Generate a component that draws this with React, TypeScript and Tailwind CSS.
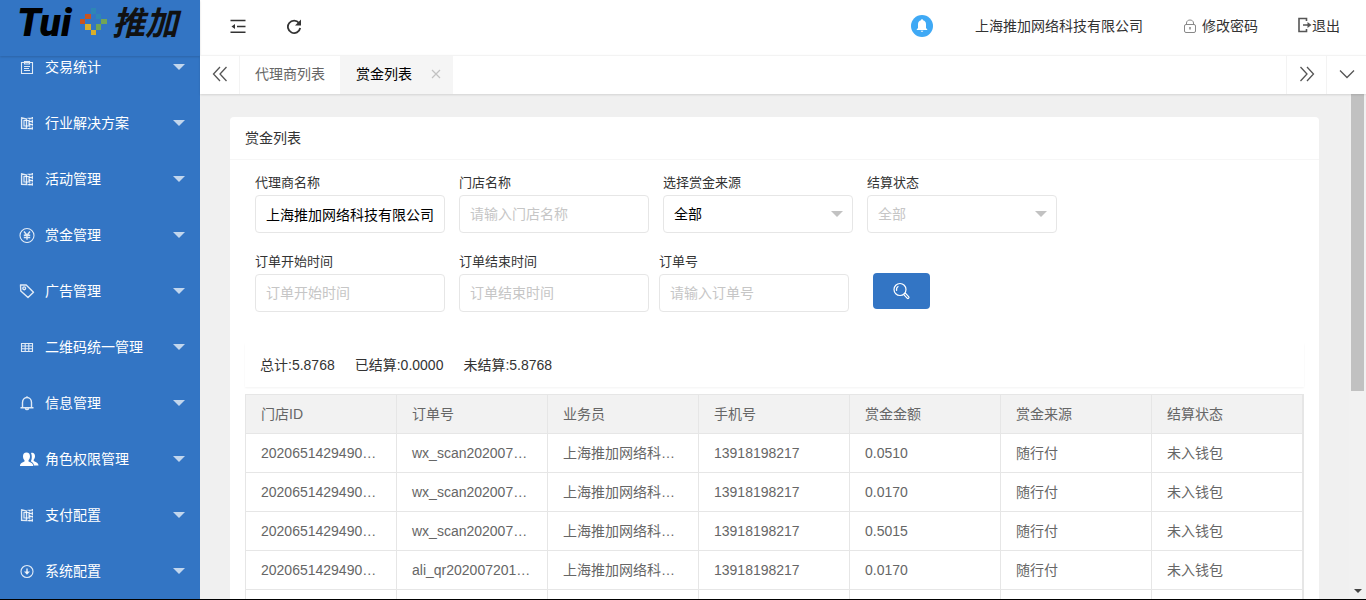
import type { ReactNode } from "react";

interface MenuItem {
  label: string;
  icon: ReactNode;
}

const stroke = {
  width: 16,
  height: 16,
  viewBox: "0 0 16 16",
  fill: "none",
  stroke: "currentColor",
  strokeWidth: 1.1,
};

const BookIcon = () => (
  <svg {...stroke}>
    <path d="M2.600 2.500v11M2 2.700l5.500 1.300v9.500L2 13.200" strokeWidth="1.400" />
    <path d="M5 5.500h5v5.500H5z" strokeWidth="1.200" />
    <path d="M13.300 2v12.500M10.800 3v11.500" strokeDasharray="1.600 .8" strokeWidth="1.300" />
    <path d="M8.500 3.200h5.500M8.500 13.600h5.500M10 6.500h4M10 9.500h4" strokeWidth="1.100" />
  </svg>
);

const MENU: MenuItem[] = [
  {
    label: "交易统计",
    icon: (
      <svg {...stroke}>
        <path d="M2.500 3.500h11v11h-11zM5.500 2.500h5v2.500h-5zM5 7.500h6M5 9.500h5M5 11.500h6" />
      </svg>
    ),
  },
  { label: "行业解决方案", icon: <BookIcon /> },
  { label: "活动管理", icon: <BookIcon /> },
  {
    label: "赏金管理",
    icon: (
      <svg {...stroke}>
        <circle cx="8" cy="8.500" r="7" />
        <path d="M5 4.500l3 3.800 3-3.800M8 8v4.800M4.800 8.300h6.400M4.800 10.500h6.400" strokeWidth="1.400" />
      </svg>
    ),
  },
  {
    label: "广告管理",
    icon: (
      <svg {...stroke} strokeWidth={1.4}>
        <path d="M1.500 2h5.700l7.300 7.200-5.500 5.300-7.200-6.500z" strokeLinejoin="round" />
        <circle cx="5.200" cy="5.300" r="1.400" />
      </svg>
    ),
  },
  {
    label: "二维码统一管理",
    icon: (
      <svg {...stroke}>
        <path d="M2.500 4.500h11v8h-11zM2.500 7h11M2.500 9.700h11M6.200 4.500v8M9.800 4.500v8" />
      </svg>
    ),
  },
  {
    label: "信息管理",
    icon: (
      <svg {...stroke} strokeWidth={1.4}>
        <path d="M1.500 12.800h13M3.500 12.800V7.500c0-3 2-5 4.500-5s4.500 2 4.500 5v5.300M6.500 13.500c.3 1.500 2.700 1.500 3 0M8 1.200v1.300" />
      </svg>
    ),
  },
  {
    label: "角色权限管理",
    icon: (
      <svg width="20" height="16" viewBox="0 0 20 16" fill="#fff">
        <path d="M12 2c2-1 4 .3 4 3 0 1.800-.6 3-1.300 3.800v1.100c1.500.9 4.800 1.500 4.800 4.600h-4.500c-.3-2-1.900-3.500-3.200-4.200.9-1.300 1.600-4.800.2-8.300z" />
        <path d="M7.500 1.500C9.800 1.500 11 3 11 5.300c0 1.800-.7 3.200-1.500 4v1.200c1.800.8 4.800 1.600 4.800 4.500H1c0-2.900 2.700-3.700 4.500-4.500V9.300C4.700 8.500 4 7.100 4 5.300c0-2.300 1.200-3.800 3.500-3.800z" />
      </svg>
    ),
  },
  { label: "支付配置", icon: <BookIcon /> },
  {
    label: "系统配置",
    icon: (
      <svg {...stroke}>
        <circle cx="8" cy="8.500" r="6" />
        <path d="M8 5.500v5" strokeWidth="1.500" />
        <path d="M5 8.500h6l-3 3.200z" fill="currentColor" stroke="none" />
      </svg>
    ),
  },
];

const COLUMNS = ["门店ID", "订单号", "业务员", "手机号", "赏金金额", "赏金来源", "结算状态"];

const makeRow = (order: string, amount: string) => [
  "20206514294901234",
  order,
  "上海推加网络科技有限公司",
  "13918198217",
  amount,
  "随行付",
  "未入钱包",
];

const ROWS = [
  makeRow("wx_scan20200720153012", "0.0510"),
  makeRow("wx_scan20200720152746", "0.0170"),
  makeRow("wx_scan20200720150921", "0.5015"),
  makeRow("ali_qr20200720145833", "0.0170"),
  makeRow("wx_scan20200720143358", "0.0170"),
];

const FIELD =
  "block h-[38px] w-[190px] rounded border border-[#e6e6e6] bg-white px-[10px] text-sm text-black outline-none placeholder:text-[#c6c6c6]";

function Triangle({ className }: { className: string }) {
  return (
    <svg width="12" height="6" viewBox="0 0 12 6" className={className} fill="currentColor">
      <path d="M0 0h12L6 6z" />
    </svg>
  );
}

function Field({ id, label, children }: { id: string; label: string; children: ReactNode }) {
  return (
    <div className="w-[190px]">
      <label htmlFor={id} className="block h-[22px] text-[13px] leading-5 text-[#333]">
        {label}
      </label>
      {children}
    </div>
  );
}

function SelectField({ id, label, muted }: { id: string; label: string; muted?: boolean }) {
  return (
    <Field id={id} label={label}>
      <div className="relative">
        <select
          id={id}
          disabled={muted}
          className={`${FIELD} appearance-none disabled:text-[#c6c6c6] disabled:opacity-100`}
        >
          <option>全部</option>
        </select>
        <Triangle className="pointer-events-none absolute right-[10px] top-4 text-[#c2c2c2]" />
      </div>
    </Field>
  );
}

function Logo() {
  return (
    <svg width="168" height="48" viewBox="0 0 168 48" aria-label="Tui 推加">
      <text x="1" y="32" fontFamily="Roboto, sans-serif" fontSize="39" fontWeight="900" fontStyle="italic">
        Tui
      </text>
      <g transform="translate(64 4)">
        <path fill="#2e86b5" d="M11 0h5v6h-5zM16 6h5v5h-5z" />
        <path fill="#c9541f" d="M5 6h6v5H5zM0 11h5v5H0z" />
        <path fill="#71a556" d="M21 11h6v5h-6zM16 16h5v6h-5z" />
        <path fill="#d9ae2b" d="M5 16h6v6H5zM11 22h5v5h-5z" />
      </g>
      <text
        x="96"
        y="31"
        fontFamily="Noto Sans CJK SC, sans-serif"
        fontSize="33"
        fontWeight="700"
        fontStyle="italic"
        fill="#111"
      >
        推加
      </text>
    </svg>
  );
}

function Sidebar() {
  return (
    <aside className="flex w-[200px] shrink-0 flex-col bg-[#3375c4] text-white">
      <div className="z-10 h-14 shrink-0 pl-4 pt-1 shadow-[0_1px_2px_rgba(0,0,0,0.15)]">
        <Logo />
      </div>
      <nav className="min-h-0 flex-1 overflow-hidden">
        {/* list is scrolled a little under the logo */}
        <ul className="-mt-[17px]">
          {MENU.map((m) => (
            <li key={m.label}>
              <a href="#" className="flex h-14 items-center pl-[19px] pr-[15px] text-sm">
                <span className="w-[26px] text-white/85">{m.icon}</span>
                <span className="flex-1">{m.label}</span>
                <Triangle className="text-white/70" />
              </a>
            </li>
          ))}
        </ul>
      </nav>
    </aside>
  );
}

function Header() {
  return (
    <header className="flex h-[55px] shrink-0 items-center justify-between bg-white pb-[3px] pl-[30px] pr-[26px] text-sm text-[#333]">
      <div className="flex gap-10">
        <button aria-label="收起菜单">
          <svg width="16" height="16" viewBox="0 0 16 16" fill="none" stroke="#333" strokeWidth="1.500">
            <path d="M.5 2.500h15M7 8.500h8.500M.5 14.300h15" />
            <path d="M5 6v5L1.500 8.500z" fill="#333" stroke="none" />
          </svg>
        </button>
        <button aria-label="刷新">
          <svg width="16" height="16" viewBox="0 0 16 16" fill="none" stroke="#333" strokeWidth="1.800">
            <path d="M13 5A6.200 6.200 0 1 0 14.200 10" />
            <path d="M15 1.500v6H9z" fill="#333" stroke="none" />
          </svg>
        </button>
      </div>
      <div className="flex items-center">
        <button aria-label="消息" className="mr-[42px]">
          <svg width="22" height="22" viewBox="0 0 22 22">
            <circle cx="11" cy="11" r="11" fill="#3fa9f5" />
            <path
              d="M11 4.200c.7 0 1 .4 1 1 2 .5 3 2 3 4v3.800l1.300 1.500v.5H5.700v-.5L7 13V9.200c0-2 1-3.500 3-4 0-.6.3-1 1-1zM9.700 15.700h2.600c-.2 1.400-2.400 1.400-2.600 0z"
              fill="#fff"
            />
          </svg>
        </button>
        <a href="#" className="mr-10">上海推加网络科技有限公司</a>
        <a href="#" className="mr-10 flex items-center gap-[5px]">
          <svg width="14" height="14" viewBox="0 0 14 14" fill="none" stroke="#888">
            <rect x="1.500" y="5.500" width="11" height="8" rx="1.500" />
            <path d="M3.500 5.500V4c0-4 7-4 7 0v1.500" />
            <path d="M7 8v2.500" strokeWidth="1.500" />
          </svg>
          修改密码
        </a>
        <a href="#" className="flex items-center">
          <svg width="14" height="18" viewBox="0 0 14 18" fill="none" stroke="#555" strokeWidth="1.600">
            <path d="M8.500 4V1.500H1v13h7.500V12M5 8h5" />
            <path d="M9.500 5l4 3-4 3z" fill="#555" stroke="none" />
          </svg>
          退出
        </a>
      </div>
    </header>
  );
}

function Chevron({ d }: { d: string }) {
  return (
    <svg width="16" height="16" viewBox="0 0 16 16" fill="none" stroke="#555" strokeWidth="1.300">
      <path d={d} />
    </svg>
  );
}

const TAB_ARROW = "flex w-10 items-center justify-center border-[#f3f3f3] pb-[2px]";

function TabBar() {
  return (
    <div className="z-10 flex h-[39px] shrink-0 border-t border-[#f3f3f3] bg-white text-sm shadow-[0_1px_2px_rgba(0,0,0,0.12)]">
      <button aria-label="向左" className={`${TAB_ARROW} border-r`}>
        <Chevron d="M8 1L1.500 8 8 15M14.500 1L8 8l6.500 7" />
      </button>
      <a href="#" className="flex items-center px-[15px] pb-[2px] text-[#666]">代理商列表</a>
      <div className="flex items-center bg-[#f5f5f5] pb-[2px] pl-4 pr-3">
        <a href="#" className="text-black">赏金列表</a>
        <button aria-label="关闭" className="ml-[19px]">
          <svg width="10" height="10" viewBox="0 0 10 10" stroke="#c2c2c2" strokeWidth="1.200">
            <path d="M1 1l8 8M9 1L1 9" />
          </svg>
        </button>
      </div>
      <div className="flex-1" />
      <button aria-label="向右" className={`${TAB_ARROW} border-l`}>
        <Chevron d="M1.500 1L8 8l-6.500 7M8 1l6.500 7L8 15" />
      </button>
      <button aria-label="更多" className={`${TAB_ARROW} border-l`}>
        <Chevron d="M1 4.500l7 7 7-7" />
      </button>
    </div>
  );
}

function Filters() {
  return (
    <form className="px-[25px] pt-[13px]" onSubmit={(e) => e.preventDefault()}>
      <div className="flex gap-[14px]">
        <Field id="agent" label="代理商名称">
          <input id="agent" className={FIELD} defaultValue="上海推加网络科技有限公司" />
        </Field>
        <Field id="store" label="门店名称">
          <input id="store" className={FIELD} placeholder="请输入门店名称" />
        </Field>
        <SelectField id="source" label="选择赏金来源" />
        <SelectField id="status" label="结算状态" muted />
      </div>
      <div className="mt-[19px] flex items-end">
        <Field id="start" label="订单开始时间">
          <input id="start" className={FIELD} placeholder="订单开始时间" />
        </Field>
        <div className="ml-[14px]">
          <Field id="end" label="订单结束时间">
            <input id="end" className={FIELD} placeholder="订单结束时间" />
          </Field>
        </div>
        <div className="ml-[10px]">
          <Field id="order" label="订单号">
            <input id="order" className={FIELD} placeholder="请输入订单号" />
          </Field>
        </div>
        <button
          aria-label="搜索"
          className="mb-[3px] ml-6 flex h-9 w-[57px] items-center justify-center rounded bg-[#3375c4] text-white"
        >
          <svg width="18" height="18" viewBox="0 0 18 18" fill="none" stroke="currentColor" strokeWidth="1.200">
            <circle cx="7" cy="7.500" r="6" />
            <path d="M3.600 8.800c-.4-2 .3-3.700 1.800-4.500" />
            <path d="M11.300 11.800l1-.8 3.500 3.800c.7.900-.6 2.200-1.500 1.500l-3.500-3.700" />
          </svg>
        </button>
      </div>
    </form>
  );
}

export default function App() {
  return (
    <div className="flex h-screen overflow-hidden border-b border-black bg-[#f0f0f0] font-['Liberation_Sans','Noto_Sans_CJK_SC',sans-serif]">
      <Sidebar />
      <div className="flex min-w-0 flex-1 flex-col">
        <Header />
        <TabBar />
        <div className="flex min-h-0 flex-1">
          <main className="min-w-0 flex-1 overflow-hidden px-[30px] pt-[23px]">
            <section className="rounded-sm bg-white pb-4">
              <h1 className="h-[43px] border-b border-[#f6f6f6] px-[15px] text-sm leading-[42px] text-[#333]">
                赏金列表
              </h1>
              <Filters />
              <div className="mx-[15px] mt-[31px] flex h-11 items-center gap-5 px-[15px] text-sm text-[#333] shadow-[0_1px_2px_rgba(0,0,0,0.05)]">
                <span>总计:5.8768</span>
                <span>已结算:0.0000</span>
                <span>未结算:5.8768</span>
              </div>
              <div className="mx-[15px] mt-[7px] border border-[#e6e6e6]">
                <table className="w-full table-fixed border-separate border-spacing-0 text-left text-sm text-[#666]">
                  <thead className="bg-[#f2f2f2]">
                    <tr>
                      {COLUMNS.map((c) => (
                        <th key={c} className="h-[39px] border-b border-r border-[#e6e6e6] px-[15px] font-normal">
                          {c}
                        </th>
                      ))}
                    </tr>
                  </thead>
                  <tbody>
                    {ROWS.map((row) => (
                      <tr key={row[1]}>
                        {row.map((cell, i) => (
                          <td key={i} className="h-[39px] truncate border-b border-r border-[#e6e6e6] px-[15px]">
                            {cell}
                          </td>
                        ))}
                      </tr>
                    ))}
                  </tbody>
                </table>
              </div>
            </section>
          </main>
          {/* scroll track */}
          <div className="flex w-[17px] shrink-0 flex-col items-center justify-between bg-[#f1f1f1] pb-[6px]">
            <div className="h-[297px] w-[13px] bg-[#c1c1c1]" />
            <svg width="8" height="4" viewBox="0 0 8 4" fill="#444">
              <path d="M0 0h8L4 4z" />
            </svg>
          </div>
        </div>
      </div>
    </div>
  );
}
